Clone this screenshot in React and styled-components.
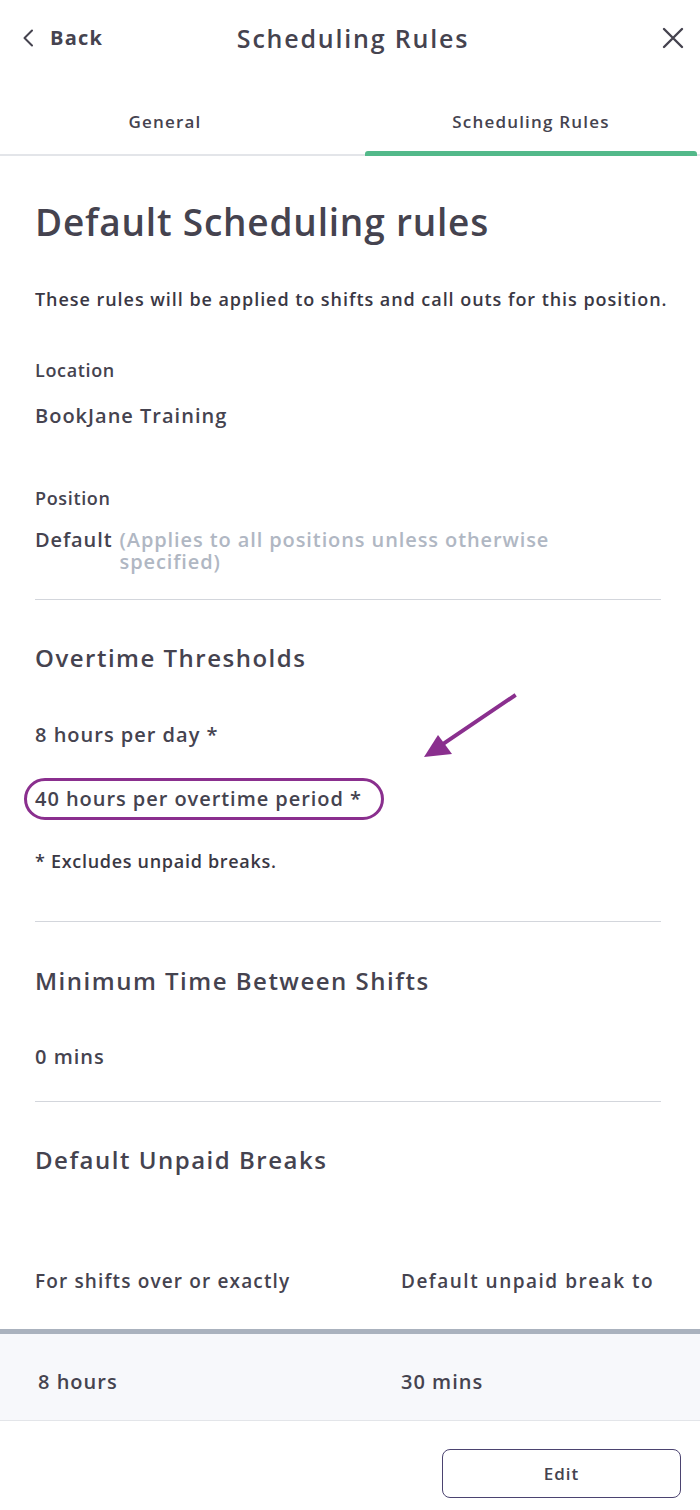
import React from 'react';
import styled, { createGlobalStyle } from 'styled-components';

const GlobalStyle = createGlobalStyle`
  * { box-sizing: border-box; }
  body {
    margin: 0;
    background: #ffffff;
    font-family: "Open Sans", "Noto Sans", sans-serif;
    color: #45434f;
  }
`;

const Page = styled.div`
  width: 700px;
  min-height: 1510px;
  background: #fff;
`;

const Header = styled.div`
  height: 75px;
  display: flex;
  align-items: center;
  justify-content: space-between;
  padding: 0 16px 0 22px;
`;

const BackButton = styled.button`
  display: flex;
  align-items: center;
  gap: 16px;
  border: none;
  background: none;
  padding: 0;
  font-family: inherit;
  font-size: 20px;
  font-weight: 700;
  letter-spacing: 1.2px;
  color: #45434f;
  width: 110px;
`;

const Title = styled.h1`
  margin: 0;
  font-size: 25px;
  font-weight: 600;
  letter-spacing: 1.8px;
  color: #45434f;
`;

const CloseButton = styled.button`
  border: none;
  background: none;
  padding: 0;
  width: 110px;
  display: flex;
  justify-content: flex-end;
`;

const Tabs = styled.div`
  display: grid;
  grid-template-columns: 330px 332px;
  column-gap: 35px;
  border-bottom: 2px solid #e3e5e9;
`;

const Tab = styled.div`
  position: relative;
  padding: 35px 0 20px;
  text-align: center;
  font-size: 17px;
  line-height: 24px;
  font-weight: 600;
  letter-spacing: 1.2px;
  color: #45434f;

  &::after {
    content: '';
    display: ${(p) => (p.$active ? 'block' : 'none')};
    position: absolute;
    left: 0;
    right: 0;
    bottom: -2px;
    height: 5px;
    border-radius: 3px 3px 0 0;
    background: #53b98a;
  }
`;

const Content = styled.div`
  position: relative;
  padding: 44px 39px 0 35px;
`;

const Heading = styled.h2`
  margin: 0;
  font-size: 37px;
  line-height: 44px;
  font-weight: 600;
  letter-spacing: 0.8px;
  color: #45434f;
`;

const Description = styled.p`
  margin: 43px 0 0;
  font-size: 18px;
  line-height: 24px;
  font-weight: 600;
  letter-spacing: 0.95px;
  white-space: nowrap;
  color: #3a3844;
`;

const Label = styled.div`
  margin-top: ${(p) => p.$top}px;
  font-size: 18px;
  line-height: 24px;
  font-weight: 600;
  letter-spacing: 0.65px;
  color: #45434f;
`;

const Value = styled.div`
  margin-top: ${(p) => p.$top}px;
  font-size: 20px;
  line-height: 28px;
  font-weight: 600;
  letter-spacing: 1px;
  color: #45434f;
`;

const PositionRow = styled.div`
  margin-top: 19px;
  display: flex;
  gap: 7px;
  font-size: 20px;
  line-height: 22px;
  font-weight: 600;
  letter-spacing: 0.9px;
`;

const Muted = styled.span`
  color: #b0b7c3;
  max-width: 450px;
`;

const Divider = styled.hr`
  margin: ${(p) => p.$top}px 0 0;
  border: none;
  border-top: 1px solid #d3d6dc;
`;

const SectionTitle = styled.h3`
  margin: ${(p) => p.$top}px 0 0;
  font-size: 24px;
  line-height: 32px;
  font-weight: 600;
  letter-spacing: 1.5px;
  color: #45434f;
`;

const Highlight = styled.div`
  margin: 29px 0 0 -11px;
  width: fit-content;
  padding: 0 19px 0 8px;
  border: 3px solid #8a2f8e;
  border-radius: 21px;
  font-size: 20px;
  line-height: 36px;
  font-weight: 600;
  letter-spacing: 0.95px;
`;

const Note = styled.div`
  margin-top: 29px;
  font-size: 18px;
  line-height: 24px;
  font-weight: 600;
  letter-spacing: 0.7px;
  color: #3a3844;
`;

const Arrow = styled.svg`
  position: absolute;
  left: 415px;
  top: 530px;
  overflow: visible;
`;

const Table = styled.table`
  width: 100%;
  margin-top: 91px;
  border-collapse: collapse;
  table-layout: fixed;
`;

const Th = styled.th`
  width: ${(p) => p.$width || 'auto'};
  padding: 0 0 34px ${(p) => p.$left}px;
  border-bottom: 5px solid #aab2be;
  text-align: left;
  font-size: 19px;
  line-height: 28px;
  font-weight: 600;
  letter-spacing: ${(p) => p.$spacing}px;
  color: #45434f;
  white-space: nowrap;
`;

const Td = styled.td`
  padding: 34px 0 24px ${(p) => p.$left}px;
  background: #f7f8fb;
  border-bottom: 1px solid #e3e5e9;
  font-size: 20px;
  line-height: 28px;
  font-weight: 600;
  letter-spacing: 1px;
  color: #45434f;
`;

const Footer = styled.div`
  display: flex;
  justify-content: flex-end;
  padding: 28px 19px 0 0;
`;

const EditButton = styled.button`
  width: 239px;
  height: 49px;
  border: 1px solid #4b4370;
  border-radius: 8px;
  background: #fff;
  font-family: inherit;
  font-size: 17px;
  font-weight: 600;
  letter-spacing: 1px;
  color: #45434f;
`;

const App = () => {
  return (
    <Page>
      <GlobalStyle />
      <Header>
        <BackButton>
          <svg width="12" height="18" viewBox="0 0 12 18">
            <path d="M10 1.5 L2.5 9 L10 16.5" fill="none" stroke="#45434f" strokeWidth="2" strokeLinecap="round" strokeLinejoin="round" />
          </svg>
          Back
        </BackButton>
        <Title>Scheduling Rules</Title>
        <CloseButton>
          <svg width="22" height="22" viewBox="0 0 22 22">
            <path d="M2 2 L20 20 M20 2 L2 20" fill="none" stroke="#45434f" strokeWidth="2.4" strokeLinecap="round" />
          </svg>
        </CloseButton>
      </Header>

      <Tabs>
        <Tab>General</Tab>
        <Tab $active>Scheduling Rules</Tab>
      </Tabs>

      <Content>
        <Heading>Default Scheduling rules</Heading>
        <Description>These rules will be applied to shifts and call outs for this position.</Description>

        <Label $top={47}>Location</Label>
        <Value $top={20}>BookJane Training</Value>

        <Label $top={56}>Position</Label>
        <PositionRow>
          <span>Default</span>
          <Muted>(Applies to all positions unless otherwise specified)</Muted>
        </PositionRow>

        <Divider $top={26} />

        <SectionTitle $top={42}>Overtime Thresholds</SectionTitle>
        <Value $top={47}>8 hours per day *</Value>
        <Highlight>40 hours per overtime period *</Highlight>
        <Note>* Excludes unpaid breaks.</Note>

        <Arrow width="100" height="72" viewBox="0 0 100 72">
          <line x1="99" y1="10" x2="28" y2="58" stroke="#8a2f8e" strokeWidth="4" strokeLinecap="square" />
          <polygon points="9,71 23,49 37,68" fill="#8a2f8e" />
        </Arrow>

        <Divider $top={48} />
        <SectionTitle $top={43}>Minimum Time Between Shifts</SectionTitle>
        <Value $top={46}>0 mins</Value>

        <Divider $top={30} />
        <SectionTitle $top={42}>Default Unpaid Breaks</SectionTitle>
      </Content>

      <Table>
        <thead>
          <tr>
            <Th $left={35} $width="401px" $spacing={1.15}>For shifts over or exactly</Th>
            <Th $left={0} $spacing={1.5}>Default unpaid break to</Th>
          </tr>
        </thead>
        <tbody>
          <tr>
            <Td $left={38}>8 hours</Td>
            <Td $left={0}>30 mins</Td>
          </tr>
        </tbody>
      </Table>

      <Footer>
        <EditButton>Edit</EditButton>
      </Footer>
    </Page>
  );
};

export default App;
